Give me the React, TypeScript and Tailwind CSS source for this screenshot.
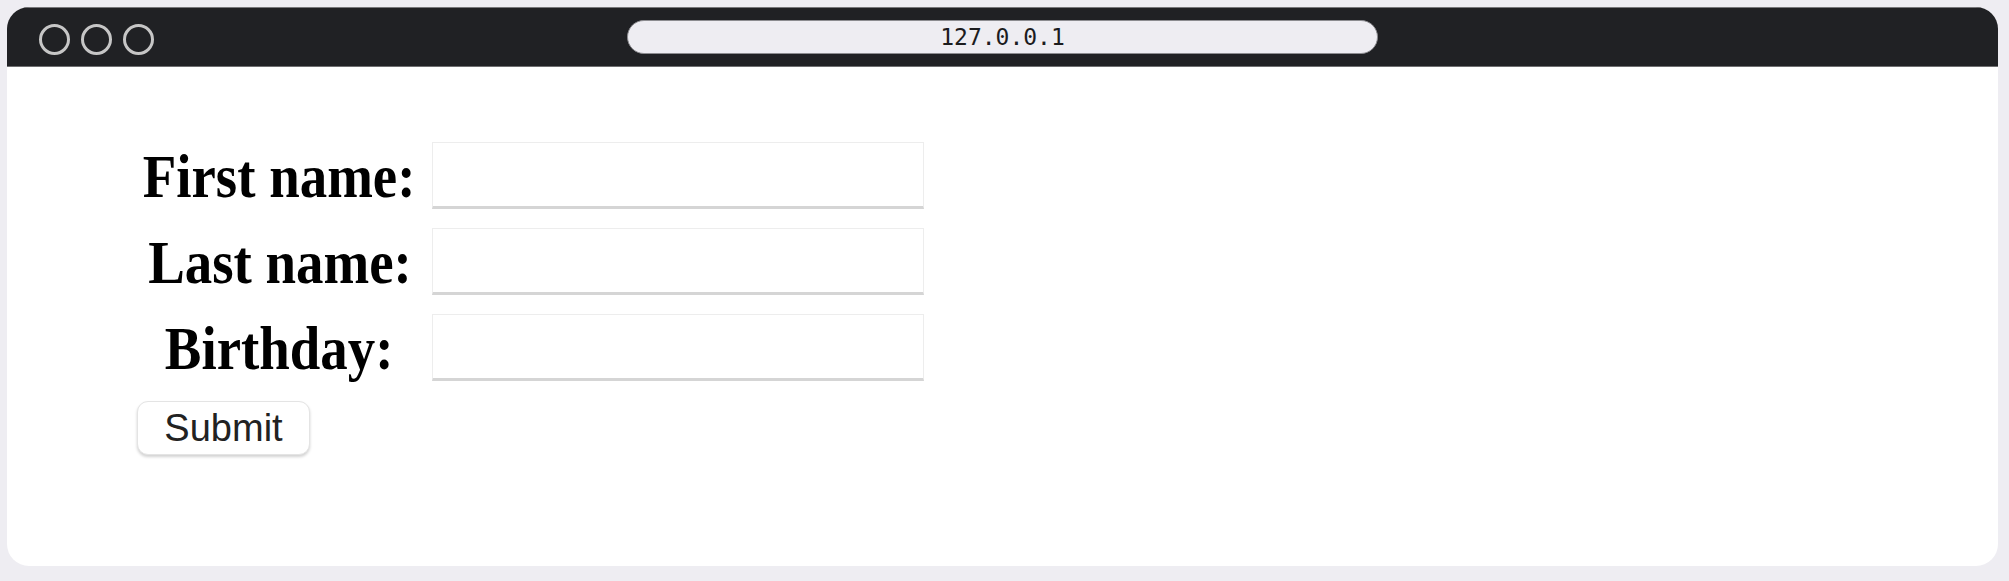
import React from "react";

export default function App() {
  const rows = ["First name:", "Last name:", "Birthday:"];
  return (
    <div className="w-[2009px] h-[581px] bg-[#eeedf2] pl-[7px] pt-[7px]">
      <div className="w-[1991px] h-[559px] bg-white rounded-[22px] overflow-hidden flex flex-col">
        <div className="h-[60px] bg-[#202124] border-t border-t-[#77777a] border-b border-b-[#6e6e70] grid grid-cols-[1fr_751px_1fr] items-center">
          <div className="flex items-center gap-[11px] pl-[32px] pt-[4px]">
            <div className="w-[31px] h-[31px] rounded-full border-[3px] border-[#c6c6c6]" />
            <div className="w-[31px] h-[31px] rounded-full border-[3px] border-[#c6c6c6]" />
            <div className="w-[31px] h-[31px] rounded-full border-[3px] border-[#c6c6c6]" />
          </div>
          <div className="h-[34px] rounded-full bg-[#eeedf2] border border-[#8c8c90] flex items-center justify-center">
            <span className="text-[23px] leading-none text-[#1c1c1e] font-['DejaVu_Sans_Mono',monospace]">
              127.0.0.1
            </span>
          </div>
          <div />
        </div>
        <div className="pl-[130px] pt-[75px] flex flex-col">
          <div className="grid grid-cols-[285px_492px] gap-x-[10px] gap-y-[19px] auto-rows-[67px]">
            {rows.map((r) => (
              <React.Fragment key={r}>
                <div className="flex items-center justify-center pt-[1px]">
                  <span className="text-[62px] leading-none font-bold text-black font-['Liberation_Serif',serif] scale-x-[0.885] whitespace-nowrap">
                    {r}
                  </span>
                </div>
                <div className="bg-white border border-[#ededed] border-b-[3px] border-b-[#d5d5d5]" />
              </React.Fragment>
            ))}
          </div>
          <div className="mt-[20px]">
            <button className="w-[173px] h-[54px] rounded-[11px] bg-white border border-[#e4e4e4] shadow-[0_2px_3px_rgba(0,0,0,0.18)] text-[38px] leading-none text-[#222] font-['Liberation_Sans',sans-serif] flex items-center justify-center">
              Submit
            </button>
          </div>
        </div>
      </div>
    </div>
  );
}
